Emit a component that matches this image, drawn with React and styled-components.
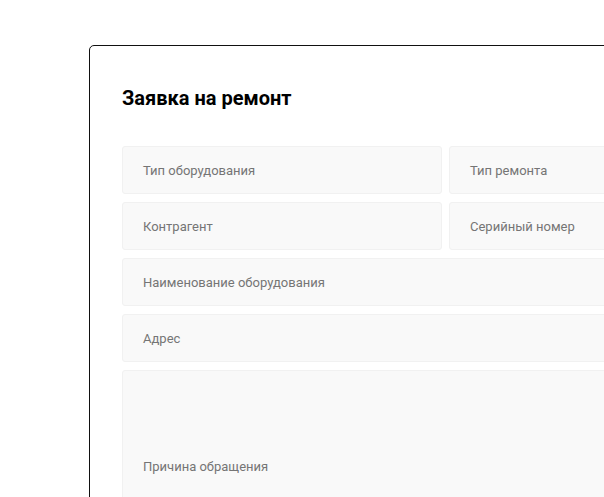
import styled, { createGlobalStyle } from "styled-components";

const GlobalStyle = createGlobalStyle`
   html, body {
      margin: 0;
      padding: 0;
      background: #ffffff;
      overflow: hidden;
   }
   body {
      font-family: Roboto, "Liberation Sans", sans-serif;
   }
`

const Page = styled.div`
   padding: 45px 0 0 89px;
   width: 900px;
`

const Card = styled.form`
   box-sizing: border-box;
   width: 713px;
   border: 1px solid #111;
   border-radius: 5px;
   padding: 41px 32px 40px 32px;
   background: #fff;
`

const Title = styled.h2`
   margin: 0 0 37px 0;
   font-size: 20px;
   line-height: 22px;
   font-weight: 700;
   color: #000;
`

const Grid = styled.div`
   display: grid;
   grid-template-columns: 320px 320px;
   column-gap: 7px;
   row-gap: 8px;
`

const Field = styled.div`
   box-sizing: border-box;
   grid-column: ${(p) => (p.$wide ? "1 / -1" : "auto")};
   height: ${(p) => (p.$tall ? "192px" : "48px")};
   display: flex;
   align-items: center;
   padding: 0 20px;
   background: #f9f9f9;
   border: 1px solid #f1f1f1;
   border-radius: 3px;
   font-size: 13px;
   color: #757575;
`

export default function App() {
   return (
      <Page>
         <GlobalStyle />
         <Card>
            <Title>Заявка на ремонт</Title>
            <Grid>
               <Field>Тип оборудования</Field>
               <Field>Тип ремонта</Field>
               <Field>Контрагент</Field>
               <Field>Серийный номер</Field>
               <Field $wide>Наименование оборудования</Field>
               <Field $wide>Адрес</Field>
               <Field $wide $tall>Причина обращения</Field>
            </Grid>
         </Card>
      </Page>
   );
}
